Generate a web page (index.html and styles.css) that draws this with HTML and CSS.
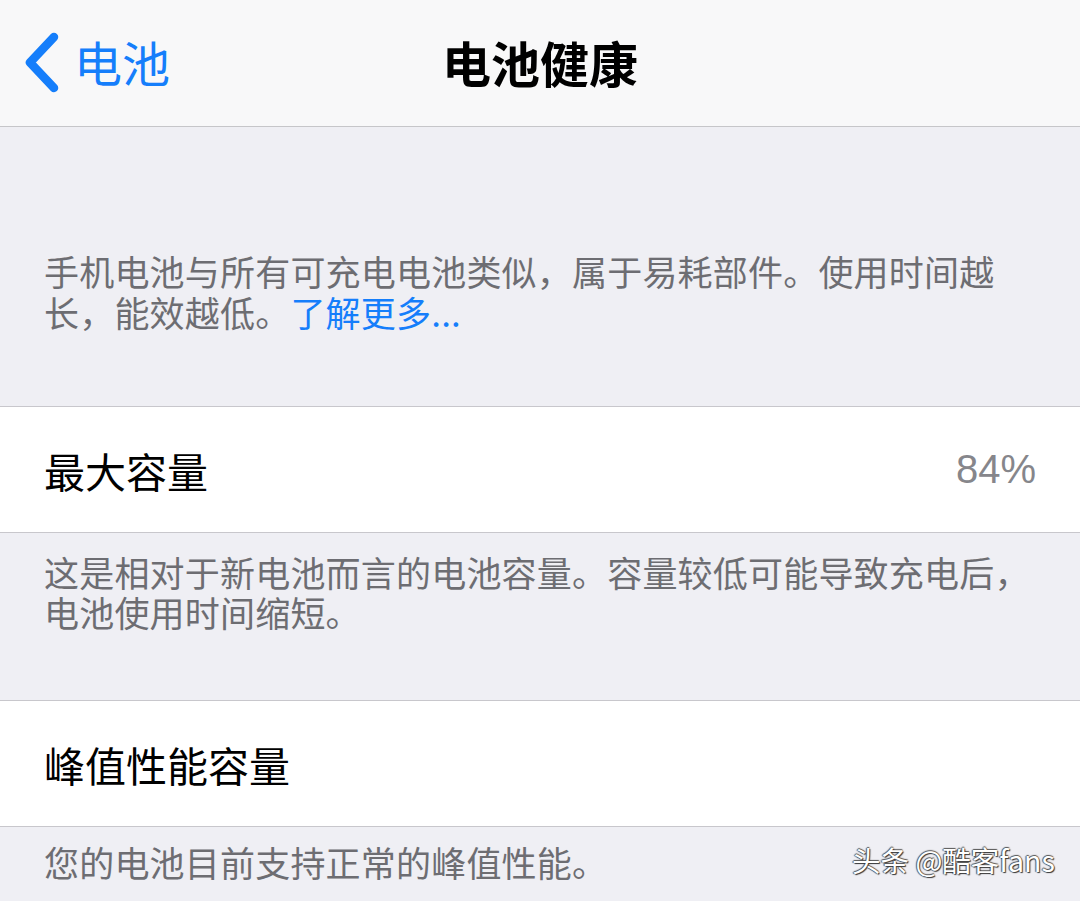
FILE: index.html
```html
<!DOCTYPE html>
<html lang="zh-CN">
<head>
<meta charset="UTF-8">
<meta name="viewport" content="width=device-width, initial-scale=1.0">
<title>电池健康</title>
<link rel="stylesheet" href="styles.css">
</head>
<body>

<header class="nav">
<a class="back" href="#">
<svg class="chevron" width="40" height="64" viewBox="0 0 40 64">
<path d="M32 6 L8 31.5 L32 57" fill="none" stroke="#157efb" stroke-width="8.5" stroke-linecap="round" stroke-linejoin="round"/>
</svg>
<span>电池</span>
</a>
<h1 class="title">电池健康</h1>
<div></div>
</header>

<main>
<p class="note intro">手机电池与所有可充电电池类似，属于易耗部件。使用时间越长，能效越低。<a href="#" class="link">了解更多...</a></p>

<div class="cell">
<span class="label">最大容量</span>
<span class="value">84%</span>
</div>
<p class="note capacity">这是相对于新电池而言的电池容量。容量较低可能导致充电后，电池使用时间缩短。</p>

<div class="cell">
<span class="label">峰值性能容量</span>
</div>
<p class="note peak">您的电池目前支持正常的峰值性能。</p>
</main>

<div class="watermark">头条 @酷客fans</div>

</body>
</html>
```

FILE: styles.css
```css
html, body {
margin: 0;
padding: 0;
}
body {
width: 1080px;
height: 901px;
overflow: hidden;
position: relative;
background-color: #efeff4;
font-family: "Noto Sans CJK SC", "Noto Sans", sans-serif;
color: #000;
}
.nav {
height: 126px;
background-color: #f8f8f9;
border-bottom: 1px solid #c6c6c9;
display: grid;
grid-template-columns: 1fr auto 1fr;
align-items: center;
}
.back {
display: flex;
align-items: center;
gap: 12px;
padding-left: 22px;
color: #157efb;
text-decoration: none;
font-size: 48px;
line-height: 1;
}
.back span {
position: relative;
top: -2px;
}
.title {
margin: 0;
font-size: 49px;
font-weight: 700;
line-height: 1;
position: relative;
top: -2px;
}
.note {
margin: 0;
padding: 0 44px;
color: #6d6d72;
font-size: 35px;
line-height: 40px;
letter-spacing: 0.2px;
}
.intro {
padding-top: 123px;
padding-bottom: 74px;
line-height: 41px;
}
.link {
color: #157efb;
text-decoration: none;
}
.capacity {
padding-top: 19px;
padding-bottom: 68px;
}
.peak {
padding-top: 15px;
}
.cell {
height: 125px;
background: #fff;
border-top: 1px solid #c8c7cc;
border-bottom: 1px solid #c8c7cc;
display: flex;
align-items: center;
justify-content: space-between;
padding: 0 44px;
}
.label {
font-size: 41px;
}
.value {
font-family: "Liberation Sans", Arial, sans-serif;
font-size: 40px;
color: #86868b;
}
.watermark {
position: absolute;
left: 852px;
top: 840px;
font-size: 28.5px;
line-height: 40px;
color: #fff;
text-shadow: 1px 1px 1px #333, -1px 0 1px #555, 0 -1px 1px #555;
}
```
